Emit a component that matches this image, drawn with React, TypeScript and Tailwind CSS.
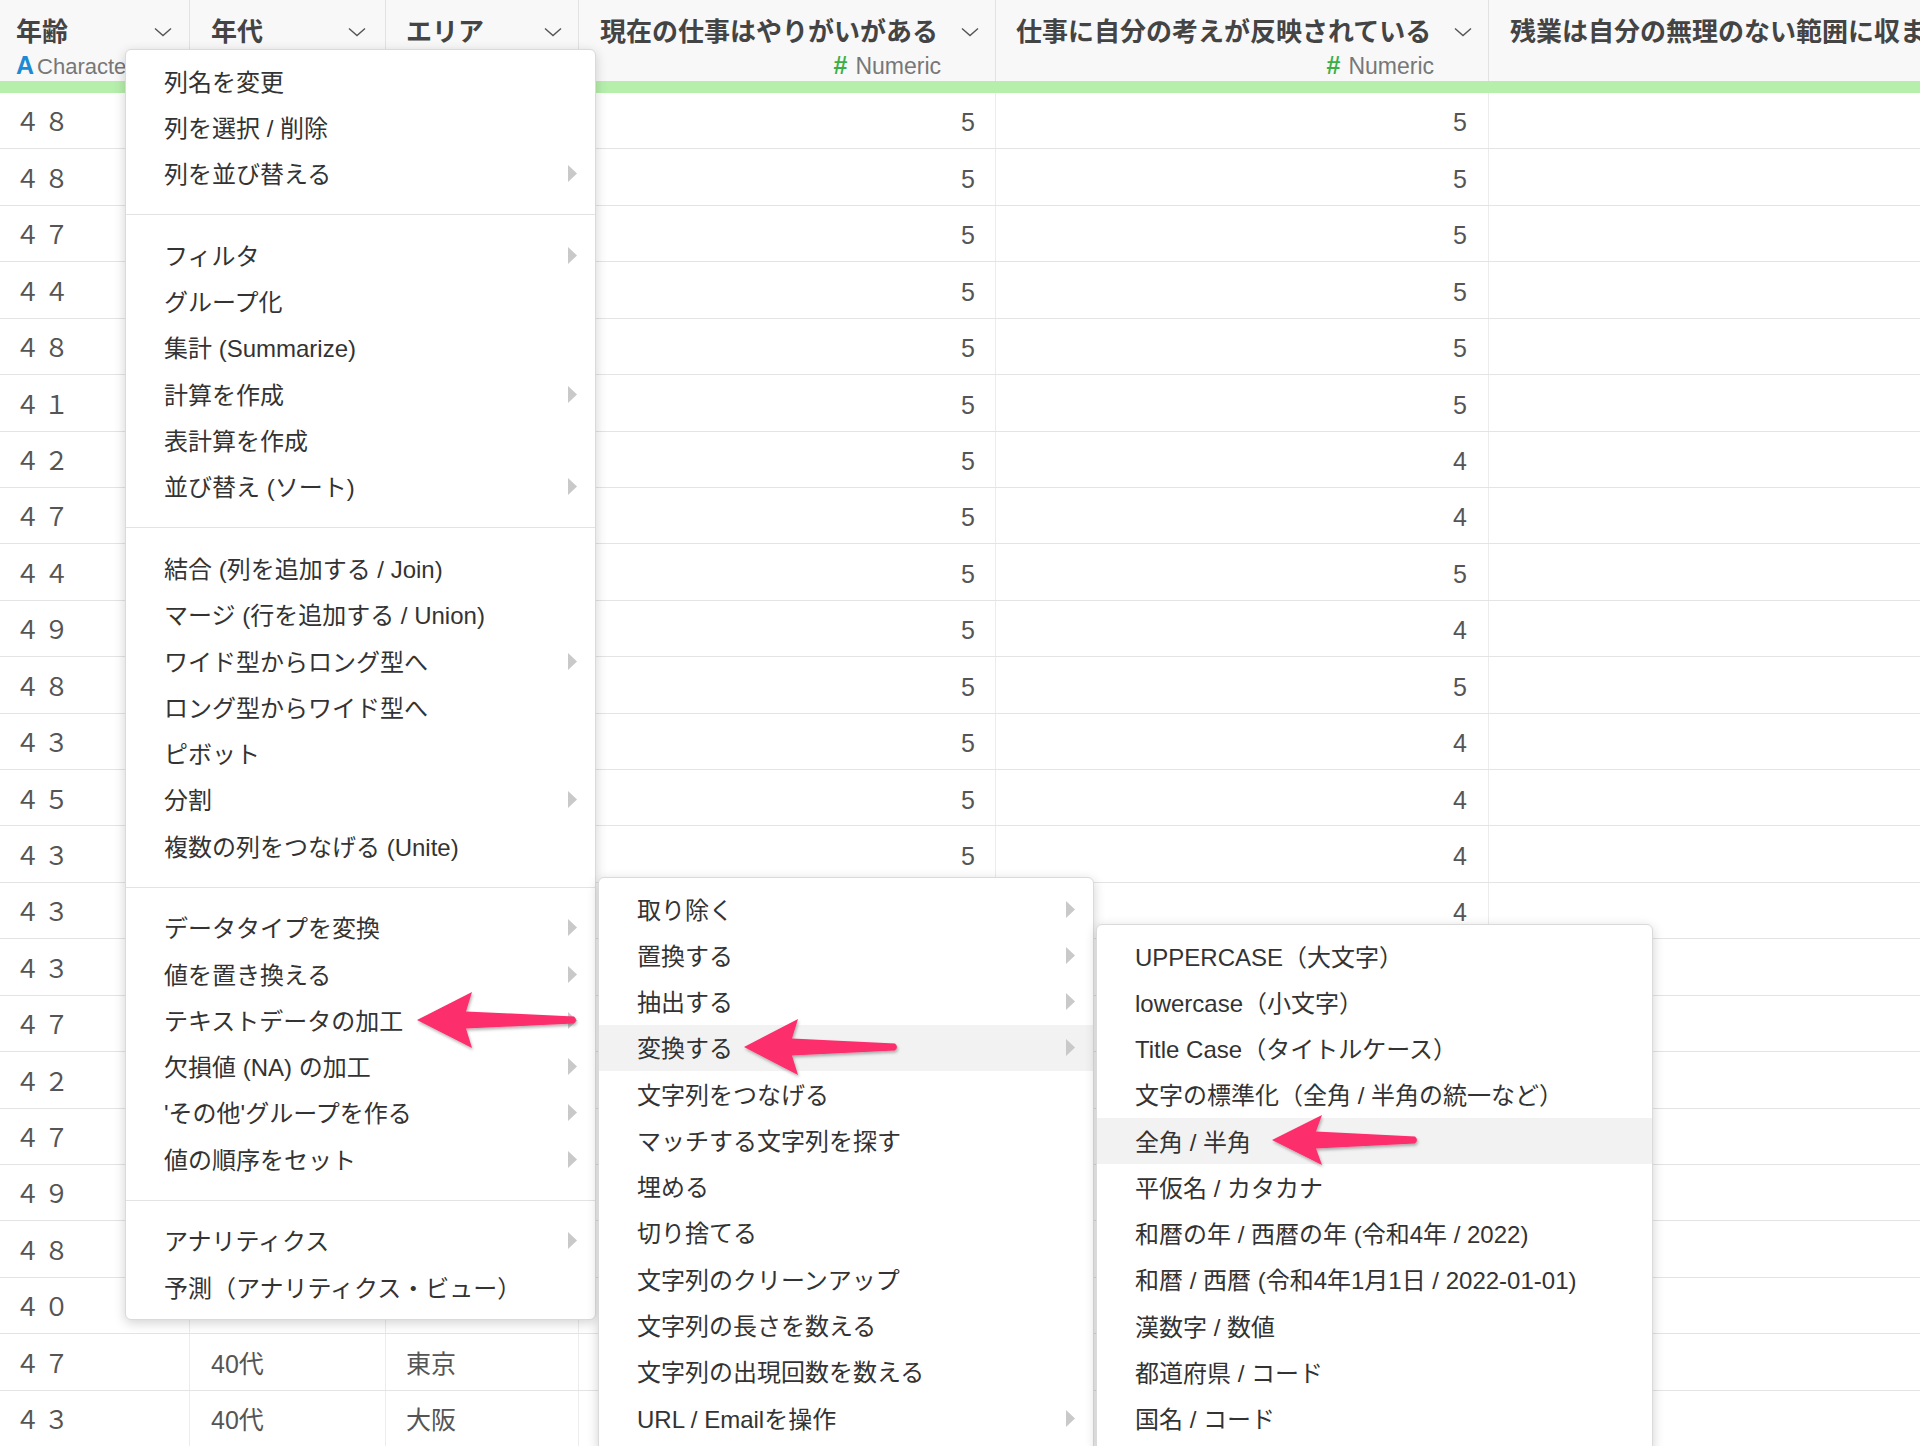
const FONT = "font-['Liberation_Sans','Noto_Sans_CJK_JP',sans-serif]";

type Row = { age: string; era: string; area: string; a: string; b: string };

const ages = ["４８", "４８", "４７", "４４", "４８", "４１", "４２", "４７", "４４", "４９", "４８", "４３", "４５", "４３", "４３", "４３", "４７", "４２", "４７", "４９", "４８", "４０", "４７", "４３"];
const colA = ["5", "5", "5", "5", "5", "5", "5", "5", "5", "5", "5", "5", "5", "5", "5", "4", "5", "4", "5", "5", "4", "5", "5", "4"];
const colB = ["5", "5", "5", "5", "5", "5", "4", "4", "5", "4", "5", "4", "4", "4", "4", "4", "5", "4", "4", "5", "4", "4", "5", "4"];
const areas = ["東京", "大阪", "東京", "愛知", "東京", "福岡", "東京", "大阪", "東京", "東京", "大阪", "東京", "東京", "愛知", "東京", "大阪", "東京", "東京", "福岡", "東京", "大阪", "東京", "東京", "大阪"];

const rows: Row[] = ages.map((age, i) => ({ age, era: "40代", area: areas[i], a: colA[i], b: colB[i] }));

function Chevron() {
  return (
    <svg width="18" height="10" viewBox="0 0 18 10" className="shrink-0">
      <polyline points="1,1.5 9,8.5 17,1.5" fill="none" stroke="#555" strokeWidth="1.4" />
    </svg>
  );
}

function Tri() {
  return (
    <svg width="9" height="17" viewBox="0 0 9 17" className="shrink-0">
      <polygon points="0,0 9,8.5 0,17" fill="#c9c9c9" />
    </svg>
  );
}

function Header() {
  return (
    <div className="flex h-[81px] bg-[#f8f8f8] text-[#444]">
      <div className="flex w-[190px] shrink-0 flex-col border-r border-[#e2e2e2] pl-[16px] pr-[17px] pt-[15px]">
        <div className="flex h-[34px] items-center justify-between">
          <span className="text-[26px] font-bold">年齢</span>
          <Chevron />
        </div>
        <div className="mt-[3px] flex h-[28px] items-center whitespace-nowrap text-[22px] text-[#777]">
          <span className="mr-[3px] text-[25px] font-bold text-[#1d8ad4]">A</span>Character
        </div>
      </div>
      <div className="flex w-[196px] shrink-0 flex-col border-r border-[#e2e2e2] pl-[21px] pr-[19px] pt-[15px]">
        <div className="flex h-[34px] items-center justify-between">
          <span className="text-[26px] font-bold">年代</span>
          <Chevron />
        </div>
      </div>
      <div className="flex w-[193px] shrink-0 flex-col border-r border-[#e2e2e2] pl-[20px] pr-[16px] pt-[15px]">
        <div className="flex h-[34px] items-center justify-between">
          <span className="text-[26px] font-bold">エリア</span>
          <Chevron />
        </div>
      </div>
      <div className="flex w-[417px] shrink-0 flex-col border-r border-[#e2e2e2] pl-[21px] pr-[16px] pt-[15px]">
        <div className="flex h-[34px] items-center justify-between">
          <span className="text-[26px] font-bold">現在の仕事はやりがいがある</span>
          <Chevron />
        </div>
        <div className="mt-[3px] flex h-[28px] items-center justify-end pr-[38px] text-[23px] text-[#777]">
          <span className="mr-[8px] text-[25px] font-bold text-[#3cae46]">#</span>Numeric
        </div>
      </div>
      <div className="flex w-[493px] shrink-0 flex-col border-r border-[#e2e2e2] pl-[20px] pr-[16px] pt-[15px]">
        <div className="flex h-[34px] items-center justify-between">
          <span className="text-[26px] font-bold">仕事に自分の考えが反映されている</span>
          <Chevron />
        </div>
        <div className="mt-[3px] flex h-[28px] items-center justify-end pr-[38px] text-[23px] text-[#777]">
          <span className="mr-[8px] text-[25px] font-bold text-[#3cae46]">#</span>Numeric
        </div>
      </div>
      <div className="flex min-w-0 flex-1 flex-col overflow-hidden pl-[21px] pt-[15px]">
        <div className="flex h-[34px] items-center whitespace-nowrap">
          <span className="text-[26px] font-bold">残業は自分の無理のない範囲に収まっている</span>
        </div>
      </div>
    </div>
  );
}

function DataRow({ r }: { r: Row }) {
  return (
    <div className="flex h-[56.43px] border-b border-[#e4e4e4] text-[#555]">
      <div className="flex w-[190px] shrink-0 items-center border-r border-[#ececec] pl-[15px] pt-[5px] text-[25px] tracking-[4px]">{r.age}</div>
      <div className="flex w-[196px] shrink-0 items-center border-r border-[#ececec] pl-[21px] pt-[5px] text-[25px]">{r.era}</div>
      <div className="flex w-[193px] shrink-0 items-center border-r border-[#ececec] pl-[20px] pt-[5px] text-[25px]">{r.area}</div>
      <div className="flex w-[417px] shrink-0 items-center justify-end border-r border-[#ececec] pr-[20px] pt-[5px] text-[25px]">{r.a}</div>
      <div className="flex w-[493px] shrink-0 items-center justify-end border-r border-[#ececec] pr-[21px] pt-[5px] text-[25px]">{r.b}</div>
      <div className="flex-1" />
    </div>
  );
}

type Entry = [string, boolean, boolean?];

const mainGroups: Entry[][] = [
  [["列名を変更", false], ["列を選択 / 削除", false], ["列を並び替える", true]],
  [
    ["フィルタ", true],
    ["グループ化", false],
    ["集計 (Summarize)", false],
    ["計算を作成", true],
    ["表計算を作成", false],
    ["並び替え (ソート)", true],
  ],
  [
    ["結合 (列を追加する / Join)", false],
    ["マージ (行を追加する / Union)", false],
    ["ワイド型からロング型へ", true],
    ["ロング型からワイド型へ", false],
    ["ピボット", false],
    ["分割", true],
    ["複数の列をつなげる (Unite)", false],
  ],
  [
    ["データタイプを変換", true],
    ["値を置き換える", true],
    ["テキストデータの加工", true],
    ["欠損値 (NA) の加工", true],
    ["'その他'グループを作る", true],
    ["値の順序をセット", true],
  ],
  [["アナリティクス", true], ["予測（アナリティクス・ビュー）", false]],
];

const textMenu: Entry[] = [
  ["取り除く", true],
  ["置換する", true],
  ["抽出する", true],
  ["変換する", true, true],
  ["文字列をつなげる", false],
  ["マッチする文字列を探す", false],
  ["埋める", false],
  ["切り捨てる", false],
  ["文字列のクリーンアップ", false],
  ["文字列の長さを数える", false],
  ["文字列の出現回数を数える", false],
  ["URL / Emailを操作", true],
];

const convertMenu: Entry[] = [
  ["UPPERCASE（大文字）", false],
  ["lowercase（小文字）", false],
  ["Title Case（タイトルケース）", false],
  ["文字の標準化（全角 / 半角の統一など）", false],
  ["全角 / 半角", false, true],
  ["平仮名 / カタカナ", false],
  ["和暦の年 / 西暦の年 (令和4年 / 2022)", false],
  ["和暦 / 西暦 (令和4年1月1日 / 2022-01-01)", false],
  ["漢数字 / 数値", false],
  ["都道府県 / コード", false],
  ["国名 / コード", false],
];

function Item({ e }: { e: Entry }) {
  const [label, sub, active] = e;
  return (
    <div
      className={`flex h-[46.27px] items-center justify-between whitespace-nowrap pl-[38px] pr-[18px] ${
        active ? "bg-[#f2f2f2]" : ""
      }`}
    >
      <span className="pt-[3px]">{label}</span>
      {sub && <Tri />}
    </div>
  );
}

function arrow(tx: number, ty: number, len: number, hl: number, hw: number) {
  const nx = tx + hl - 6;
  return [
    `M${tx},${ty}`,
    `L${tx + hl},${ty - hw}`,
    `L${nx},${ty - 8.5}`,
    `L${tx + len - 3},${ty - 3.5}`,
    `Q${tx + len + 1},${ty} ${tx + len - 3},${ty + 3.5}`,
    `L${nx},${ty + 8.5}`,
    `L${tx + hl},${ty + hw}`,
    "Z",
  ].join(" ");
}

export default function App() {
  return (
    <div className={`relative h-[1446px] w-[1920px] overflow-hidden bg-white ${FONT}`}>
      <Header />
      <div className="h-[12px] bg-[#b6efab]" />
      {rows.map((r, i) => (
        <DataRow key={i} r={r} />
      ))}

      {/* column menu */}
      <div className="absolute left-[125px] top-[49px] w-[471px] rounded-[6px] border border-[#dadada] bg-white pb-[9px] pt-[8px] text-[24px] text-[#333] shadow-[0_3px_12px_rgba(0,0,0,0.18)]">
        {mainGroups.map((g, gi) => (
          <div key={gi}>
            {gi > 0 && <div className="my-[17.25px] h-px bg-[#e3e3e3]" />}
            {g.map((e) => (
              <Item key={e[0]} e={e} />
            ))}
          </div>
        ))}
      </div>

      {/* text submenu */}
      <div className="absolute left-[598px] top-[877px] w-[496px] rounded-[6px] border border-[#dadada] bg-white pb-[9px] pt-[8px] text-[24px] text-[#333] shadow-[0_3px_12px_rgba(0,0,0,0.18)]">
        {textMenu.map((e) => (
          <Item key={e[0]} e={e} />
        ))}
      </div>

      {/* convert submenu */}
      <div className="absolute left-[1096px] top-[924px] w-[557px] rounded-[6px] border border-[#dadada] bg-white pb-[9px] pt-[8px] text-[24px] text-[#333] shadow-[0_3px_12px_rgba(0,0,0,0.18)]">
        {convertMenu.map((e) => (
          <Item key={e[0]} e={e} />
        ))}
      </div>

      <svg className="pointer-events-none absolute left-0 top-0" width="1920" height="1446">
        <defs>
          <filter id="sh" x="-10%" y="-30%" width="120%" height="160%">
            <feDropShadow dx="1" dy="2" stdDeviation="1.6" floodColor="#000" floodOpacity="0.3" />
          </filter>
        </defs>
        <g fill="#fc2e6c" filter="url(#sh)">
          <path d={arrow(417, 1020, 160, 55, 28)} />
          <path d={arrow(744, 1047, 154, 54, 28)} />
          <path d={arrow(1272, 1140, 146, 50, 25)} />
        </g>
      </svg>
    </div>
  );
}
